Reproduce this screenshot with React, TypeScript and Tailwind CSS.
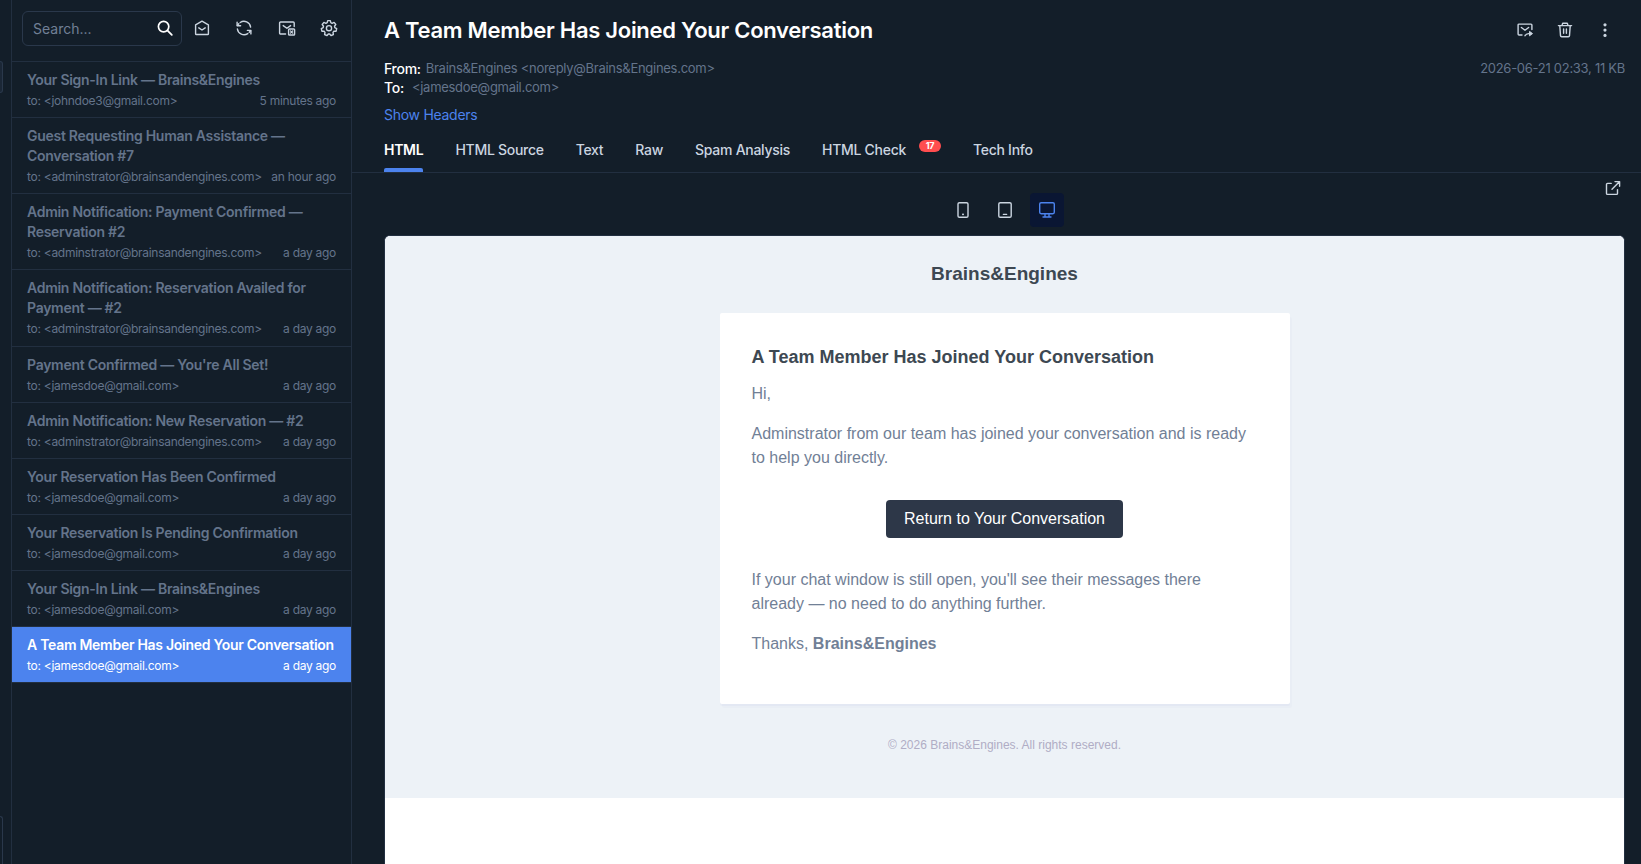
import { useState } from 'react';
import type { ReactNode } from 'react';

interface Message {
  id: number;
  subject: string;
  to: string;
  time: string;
}

const messages: Message[] = [
  { id: 1, subject: 'Your Sign-In Link — Brains&Engines', to: 'johndoe3@gmail.com', time: '5 minutes ago' },
  { id: 2, subject: 'Guest Requesting Human Assistance — Conversation #7', to: 'adminstrator@brainsandengines.com', time: 'an hour ago' },
  { id: 3, subject: 'Admin Notification: Payment Confirmed — Reservation #2', to: 'adminstrator@brainsandengines.com', time: 'a day ago' },
  { id: 4, subject: 'Admin Notification: Reservation Availed for Payment — #2', to: 'adminstrator@brainsandengines.com', time: 'a day ago' },
  { id: 5, subject: "Payment Confirmed — You're All Set!", to: 'jamesdoe@gmail.com', time: 'a day ago' },
  { id: 6, subject: 'Admin Notification: New Reservation — #2', to: 'adminstrator@brainsandengines.com', time: 'a day ago' },
  { id: 7, subject: 'Your Reservation Has Been Confirmed', to: 'jamesdoe@gmail.com', time: 'a day ago' },
  { id: 8, subject: 'Your Reservation Is Pending Confirmation', to: 'jamesdoe@gmail.com', time: 'a day ago' },
  { id: 9, subject: 'Your Sign-In Link — Brains&Engines', to: 'jamesdoe@gmail.com', time: 'a day ago' },
  { id: 10, subject: 'A Team Member Has Joined Your Conversation', to: 'jamesdoe@gmail.com', time: 'a day ago' },
];

const tabs = [
  { name: 'HTML' },
  { name: 'HTML Source' },
  { name: 'Text' },
  { name: 'Raw' },
  { name: 'Spam Analysis' },
  { name: 'HTML Check', badge: 17 },
  { name: 'Tech Info' },
];

function Icon({ children }: { children: ReactNode }) {
  return (
    <svg
      width="20"
      height="20"
      viewBox="0 0 20 20"
      fill="none"
      stroke="currentColor"
      strokeWidth="1.4"
      strokeLinecap="round"
      strokeLinejoin="round"
      className="shrink-0"
    >
      {children}
    </svg>
  );
}

const SearchIcon = () => (
  <Icon>
    <circle cx="8.6" cy="8.6" r="5.2" strokeWidth="1.7" />
    <path d="M12.6 12.6 16.8 16.8" strokeWidth="1.8" />
  </Icon>
);

const MailOpenIcon = () => (
  <Icon>
    <path d="M3.6 6.8 10 3.2l6.4 3.6v8.9a.8.8 0 0 1-.8.8H4.4a.8.8 0 0 1-.8-.8z" />
    <path d="M6.8 9.8 10 12l3.2-2.2" />
  </Icon>
);

const RefreshIcon = () => (
  <Icon>
    <path d="M3.1 4.2v3.5h3.5M16.9 15.9v-3.5h-3.5" />
    <path d="M6.2 4.5a6.7 6.7 0 0 1 10.4 4.6M13.8 15.6A6.7 6.7 0 0 1 3.4 11" />
    <path d="m3.4 7.4 1.4-1.6M16.6 12.7l-1.4 1.6" />
  </Icon>
);

const MailDeleteIcon = () => (
  <Icon>
    <path d="M8.6 16H3.6a1 1 0 0 1-1-1V5a1 1 0 0 1 1-1h12.6a1 1 0 0 1 1 1v3.6" />
    <path d="m6.2 7.6 3.7 2.7 3.7-2.7" />
    <rect x="11.6" y="11" width="6" height="6" rx="0.8" strokeWidth="1.4" />
    <path d="m13.5 12.9 2.2 2.2m0-2.2-2.2 2.2" strokeWidth="1.3" />
  </Icon>
);

const SettingsIcon = () => (
  <Icon>
    <path d="M8.7 2.6h2.6l.5 2 1.3.7 2-.9 1.7 2.1-1.3 1.7.3 1.4 1.9 1-.6 2.6-2.2.1-.9 1.1.4 2.1-2.4 1.1L10.7 16H9.3L8 17.6l-2.4-1.1.4-2.1-.9-1.1-2.2-.1-.6-2.6 1.9-1 .3-1.4-1.3-1.7 1.7-2.1 2 .9 1.3-.7z" />
    <circle cx="10" cy="10.2" r="2.6" />
  </Icon>
);

const ForwardIcon = () => (
  <Icon>
    <path d="M7 15H4a.9.9 0 0 1-.9-.9V5a.9.9 0 0 1 .9-.9h12a.9.9 0 0 1 .9.9v4.6" />
    <path d="M6.4 7.5 10 10.2l3.6-2.7" />
    <path d="M10 15.8c.7-1.5 1.9-2.2 3.6-2.2h1.6" />
    <path d="M14.8 11.6 17.5 13.6l-2.7 2z" fill="currentColor" strokeWidth="1" />
  </Icon>
);

const TrashIcon = () => (
  <Icon>
    <path d="M3.4 5.6h13.2M7 5.4l.7-2.2h4.6l.7 2.2M4.8 5.8l.7 9.8a1.2 1.2 0 0 0 1.2 1.1h6.6a1.2 1.2 0 0 0 1.2-1.1l.7-9.8" />
    <path d="M8.6 9v4.2M11.4 9v4.2" />
  </Icon>
);

const DotsIcon = () => (
  <Icon>
    <g fill="currentColor" stroke="none">
      <circle cx="10" cy="4.8" r="1.6" />
      <circle cx="10" cy="10.1" r="1.6" />
      <circle cx="10" cy="15.4" r="1.6" />
    </g>
  </Icon>
);

const ExternalIcon = () => (
  <Icon>
    <path d="M8.2 5.4H4.5a1 1 0 0 0-1 1v9a1 1 0 0 0 1 1h9a1 1 0 0 0 1-1v-3.8" />
    <path d="M12 3.6h4.6v4.6M16.4 3.8 9 11.2" />
  </Icon>
);

const PhoneIcon = () => (
  <Icon>
    <rect x="5" y="2.7" width="10" height="14.6" rx="1.4" />
    <path d="M9.8 14.4h.4" strokeWidth="1.6" />
  </Icon>
);

const TabletIcon = () => (
  <Icon>
    <rect x="3.8" y="2.7" width="12.4" height="14.6" rx="1.4" />
    <path d="M8.4 14.4h3.2" />
  </Icon>
);

const DesktopIcon = () => (
  <Icon>
    <rect x="2.7" y="2.7" width="14.6" height="11" rx="1.4" />
    <path d="M8 14v2.8M12 14v2.8M6 17h8" />
  </Icon>
);

function MessageRow({ message, active, onClick }: { message: Message; active: boolean; onClick: () => void }) {
  return (
    <button
      onClick={onClick}
      className={`block w-full border-b border-[#222f40] px-[15px] pt-[8px] pb-[7.15px] text-left ${
        active ? 'bg-[#4c83ee] text-white' : 'text-[#64748b]'
      }`}
    >
      <div className="text-[14px] leading-5 font-semibold">{message.subject}</div>
      <div className="mt-[2px] flex justify-between text-[12px] leading-[18px] whitespace-nowrap">
        <span>to: &lt;{message.to}&gt;</span>
        <span>{message.time}</span>
      </div>
    </button>
  );
}

function EmailPreview() {
  return (
    <div className="flex-1 overflow-hidden rounded-t-md border border-b-0 border-[#222f40] bg-white font-['Liberation_Sans',Arial,sans-serif] tracking-normal">
      <div className="flex h-[562px] flex-col items-center bg-[#edf2f7]">
        <div className="pt-6 pb-[26px] text-[19px] leading-[27px] font-bold text-[#3d4852]">Brains&amp;Engines</div>
        <div className="h-[391px] w-[570px] rounded-[2px] bg-white p-8 text-[16px] leading-6 text-[#718096] shadow-[0_2px_0_rgba(0,0,150,0.025),2px_4px_0_rgba(0,0,150,0.015)]">
          <h1 className="text-[18px] leading-6 font-bold text-[#3d4852]">A Team Member Has Joined Your Conversation</h1>
          <p className="mt-[13px]">Hi,</p>
          <p className="mt-4">Adminstrator from our team has joined your conversation and is ready to help you directly.</p>
          <div className="my-[30px] flex justify-center">
            <a className="rounded bg-[#2d3748] px-[18px] py-[7px] text-white">Return to Your Conversation</a>
          </div>
          <p>If your chat window is still open, you'll see their messages there already — no need to do anything further.</p>
          <p className="mt-4">
            Thanks, <strong>Brains&amp;Engines</strong>
          </p>
        </div>
        <p className="mt-8 text-[12px] leading-[18px] text-[#b0adc5]">© 2026 Brains&amp;Engines. All rights reserved.</p>
      </div>
    </div>
  );
}

export default function App() {
  const [activeId, setActiveId] = useState(10);
  const [activeTab, setActiveTab] = useState('HTML');

  return (
    <div className="flex h-[864px] w-full overflow-hidden bg-[#131e29] font-['Inter',sans-serif] tracking-[-0.28px] text-[#cbd5e0]">
      {/* Edge of the collapsed navigation */}
      <div className="flex w-[11px] shrink-0 flex-col justify-between pt-[61px]">
        <div className="h-8 w-[3px] rounded-r-md border border-l-0 border-[#2a384b] bg-[#1b2736]" />
        <div className="h-12 w-[3px] rounded-tr-md border-t border-r border-[#2a384b]" />
      </div>

      {/* Message list */}
      <aside className="w-[341px] shrink-0 border-x border-[#222f40]">
        <div className="flex h-[62px] items-start border-b border-[#222f40] pt-[11px] pl-[10px]">
          <div className="flex h-[35px] w-40 items-center justify-between rounded-md border border-[#2a384b] pr-[6px] pl-[10px]">
            <input
              placeholder="Search..."
              className="w-24 bg-transparent pb-px text-[14px] tracking-normal outline-none placeholder:text-[#718096]"
            />
            <span className="pb-px text-white">
              <SearchIcon />
            </span>
          </div>
          <div className="flex h-[34px] items-center gap-[22.4px] pl-[10px]">
            <MailOpenIcon />
            <RefreshIcon />
            <MailDeleteIcon />
            <SettingsIcon />
          </div>
        </div>
        {messages.map((message) => (
          <MessageRow
            key={message.id}
            message={message}
            active={message.id === activeId}
            onClick={() => setActiveId(message.id)}
          />
        ))}
      </aside>

      {/* Message view */}
      <main className="flex min-w-0 flex-1 flex-col">
        <header className="flex justify-between pt-[14px] pr-4 pl-8">
          <div>
            <h1 className="text-[22px] leading-8 font-semibold text-white">A Team Member Has Joined Your Conversation</h1>
            <div className="mt-[13px] flex items-center text-[13px] leading-[19px] text-[#64748b]">
              <span className="mr-[5px] text-[14px] font-medium text-white">From:</span>
              Brains&amp;Engines &lt;noreply@Brains&amp;Engines.com&gt;
            </div>
            <div className="flex items-center text-[13px] leading-[19px] text-[#64748b]">
              <span className="mr-2 text-[14px] font-medium text-white">To:</span>
              &lt;jamesdoe@gmail.com&gt;
            </div>
            <button className="mt-2 block text-[14px] leading-5 text-[#4c83ee]">Show Headers</button>
          </div>
          <div className="flex flex-col items-end">
            <div className="flex h-8 items-center gap-5 pr-[10px]">
              <ForwardIcon />
              <TrashIcon />
              <DotsIcon />
            </div>
            <span className="mt-[13px] text-[13px] leading-[19px] text-[#64748b]">2026-06-21 02:33, 11 KB</span>
          </div>
        </header>

        <nav className="mt-[7px] flex h-[41px] gap-8 border-b border-[#222f40] pl-8 text-[14px] font-medium">
          {tabs.map((tab) => (
            <button
              key={tab.name}
              onClick={() => setActiveTab(tab.name)}
              className="flex h-10 flex-col justify-between pt-2"
            >
              <span className={`flex leading-5 ${tab.name === activeTab ? 'font-semibold text-white' : ''}`}>
                {tab.name}
                {tab.badge && (
                  <span className="ml-[13px] h-3 w-[22px] rounded-full bg-[#ff4d4f] text-center text-[9px] leading-3 font-bold text-white">
                    {tab.badge}
                  </span>
                )}
              </span>
              {tab.name === activeTab && <span className="h-1 w-full rounded-t-[2px] bg-[#4c83ee]" />}
            </button>
          ))}
        </nav>

        <div className="flex flex-1 flex-col pr-4 pl-8">
          <div className="grid h-[62px] grid-cols-[1fr_auto_1fr]">
            <div />
            <div className="flex gap-2 pt-5">
              <button className="flex size-[34px] items-center justify-center rounded">
                <PhoneIcon />
              </button>
              <button className="flex size-[34px] items-center justify-center rounded">
                <TabletIcon />
              </button>
              <button className="flex size-[34px] items-center justify-center rounded bg-[#0a1633] text-[#4c83ee]">
                <DesktopIcon />
              </button>
            </div>
            <div className="flex justify-end pt-[5px] pr-[2px]">
              <ExternalIcon />
            </div>
          </div>
          <EmailPreview />
        </div>
      </main>
    </div>
  );
}
